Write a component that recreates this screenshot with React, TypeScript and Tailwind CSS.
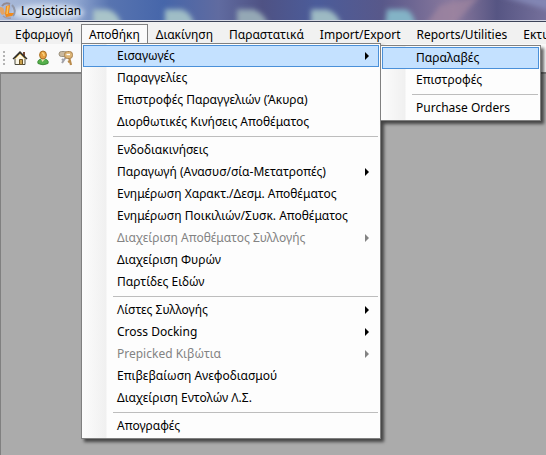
import React from "react";

type Entry = {
  label: string;
  arrow?: boolean;
  disabled?: boolean;
  active?: boolean;
};

const menuBar = [
  "Εφαρμογή",
  "Αποθήκη",
  "Διακίνηση",
  "Παραστατικά",
  "Import/Export",
  "Reports/Utilities",
  "Εκτυπώσεις",
];

const warehouseGroups: Entry[][] = [
  [
    { label: "Εισαγωγές", arrow: true, active: true },
    { label: "Παραγγελίες" },
    { label: "Επιστροφές Παραγγελιών (Άκυρα)" },
    { label: "Διορθωτικές Κινήσεις Αποθέματος" },
  ],
  [
    { label: "Ενδοδιακινήσεις" },
    { label: "Παραγωγή (Ανασυσ/σία-Μετατροπές)", arrow: true },
    { label: "Ενημέρωση Χαρακτ./Δεσμ. Αποθέματος" },
    { label: "Ενημέρωση Ποικιλιών/Συσκ. Αποθέματος" },
    { label: "Διαχείριση Αποθέματος Συλλογής", arrow: true, disabled: true },
    { label: "Διαχείριση Φυρών" },
    { label: "Παρτίδες Ειδών" },
  ],
  [
    { label: "Λίστες Συλλογής", arrow: true },
    { label: "Cross Docking", arrow: true },
    { label: "Prepicked Κιβώτια", arrow: true, disabled: true },
    { label: "Επιβεβαίωση Ανεφοδιασμού" },
    { label: "Διαχείριση Εντολών Λ.Σ." },
  ],
  [{ label: "Απογραφές" }],
];

const importGroups: Entry[][] = [
  [{ label: "Παραλαβές", active: true }, { label: "Επιστροφές" }],
  [{ label: "Purchase Orders" }],
];

// desktop icons that shine through the glass title bar
const Glass = () => (
  <svg
    className="absolute inset-0 size-full"
    viewBox="0 0 546 20"
    preserveAspectRatio="none"
    aria-hidden="true"
  >
    <defs>
      <linearGradient id="glass">
        <stop offset="0" stopColor="#a9b9d8" />
        <stop offset="0.14" stopColor="#8fa6d0" />
        <stop offset="0.2" stopColor="#5874b0" />
        <stop offset="0.3" stopColor="#4666aa" />
        <stop offset="0.4" stopColor="#606ba0" />
        <stop offset="0.48" stopColor="#4f5284" />
        <stop offset="0.58" stopColor="#4b5c9a" />
        <stop offset="0.7" stopColor="#58588a" />
        <stop offset="0.83" stopColor="#8b7a9e" />
        <stop offset="0.91" stopColor="#565583" />
        <stop offset="1" stopColor="#75709b" />
      </linearGradient>
      <filter id="soft" filterUnits="userSpaceOnUse" x="-20" y="-20" width="600" height="60">
        <feGaussianBlur stdDeviation="2.5" />
      </filter>
    </defs>
    <rect width="546" height="20" fill="url(#glass)" />
    <g filter="url(#soft)">
      <ellipse cx="48" cy="12" rx="36" ry="8" fill="#dbe5f3" opacity="0.9" />
      <path d="M93 9 H108 Q119 12 122 26 H93 Z" fill="#a9c4c9" />
      <path d="M165 9 H182 Q192 12 195 26 H165 Z" fill="#9fbdc6" />
      <path d="M237 9 H253 Q265 12 269 26 H237 Z" fill="#94a8b5" />
      <path d="M311 9 H327 Q338 12 342 26 H311 Z" fill="#9dbac3" />
      <path d="M387 9 H406 Q414 12 416 26 H385 Z" fill="#83b3c6" />
      <path d="M424 26 L440 5 L480 -4 L452 26 Z" fill="#a1869f" opacity="0.7" />
      <path d="M500 -4 H550 V10 Z" fill="#8286b4" />
    </g>
  </svg>
);

const AppLogo = () => (
  <svg width="17" height="18" viewBox="0 0 17 18" aria-hidden="true">
    <path d="M0 5 Q4 5 4 8 L5 12 L2 13 Q0 11 0 9 Z" fill="#e3a465" />
    <path d="M2 4 Q5 0 10 2" fill="none" stroke="#94898f" strokeWidth="2" />
    <path d="M12 3 Q17 8 13 14" fill="none" stroke="#9197a8" strokeWidth="2" />
    <path d="M3 14 Q6 17 11 16" fill="none" stroke="#a39aa4" strokeWidth="1.5" />
    <path d="M6 4 L10 3 L9 11 L14 11 L12 14 L6 15 L5 12 Z" fill="#f08a1d" />
    <path d="M8 4 L7 12" stroke="#f9c45b" strokeWidth="1.5" />
  </svg>
);

const HomeIcon = () => (
  <svg width="16" height="16" viewBox="0 0 16 16" aria-hidden="true">
    <path d="M11 2 H13 V6 H11 Z" fill="#7a4a35" />
    <path d="M3 8 L8 3 L13 8 V14.5 H3 Z" fill="#fbf7e8" stroke="#4c4c40" />
    <path d="M1 9 L8 2 L15 9" fill="none" stroke="#33302a" strokeWidth="1.4" />
    <path d="M3 9 L8 4 L13 9" fill="none" stroke="#e0bd62" />
    <path d="M7.5 14.5 V9.5 H10.5 V14.5 Z" fill="#c9a04a" stroke="#6b5326" />
  </svg>
);

const UserIcon = () => (
  <svg width="16" height="16" viewBox="0 0 16 16" aria-hidden="true">
    <path d="M3 13.5 C2 10 5 9 8 9 C11 9 14 10 13 13.5 Q8 16 3 13.5 Z" fill="#55b04c" stroke="#3c8a36" />
    <path d="M6 9 L7.5 12 L10 9 Z" fill="#e9e3b4" />
    <ellipse cx="8" cy="5" rx="3.4" ry="4" fill="#e6a040" stroke="#a86f24" />
    <path d="M7 3 Q9 3 9 6" fill="none" stroke="#f8d07c" strokeWidth="1.5" />
  </svg>
);

const KeysIcon = () => (
  <svg width="16" height="16" viewBox="0 0 16 16" aria-hidden="true">
    <path d="M8 7 L4 13 M6 11 L4 9" stroke="#a3a3aa" strokeWidth="2" />
    <rect x="1" y="1.5" width="8" height="5" rx="2.5" fill="#c9b9a0" stroke="#9b917f" />
    <path d="M11 7 L13 15 M12 11 L10 12" stroke="#b98a4b" strokeWidth="2.2" />
    <rect x="6.5" y="1.5" width="8" height="7" rx="3" fill="#dcb475" stroke="#a98250" />
    <path d="M8.5 4.5 H12" stroke="#fff" strokeWidth="1.4" />
  </svg>
);

const Grip = () => (
  <svg width="3" height="16" viewBox="0 0 3 16" aria-hidden="true">
    <path d="M1 1 V16" stroke="#b4b4b4" strokeWidth="2" strokeDasharray="2 2" />
  </svg>
);

const Arrow = () => (
  <svg className="shrink-0" width="4" height="8" viewBox="0 0 4 8" aria-hidden="true">
    <path d="M0 0 L4 4 L0 8 Z" fill="currentColor" />
  </svg>
);

const Menu = ({ groups, label, width }: { groups: Entry[][]; label: string; width: string }) => (
  <div
    role="menu"
    aria-label={label}
    className={`${width} border border-[#808080] bg-linear-to-r from-[#fcfcfc] from-0% via-[#f0f0f0] via-[24px] to-[#fdfdfd] to-[25px] p-px shadow-[3px_3px_3px_0px_rgba(0,0,0,0.6)]`}
  >
    {groups.map((group, i) => (
      <div key={i} role="group">
        {i > 0 && (
          <div className="flex h-1.5 items-center pr-px pl-[30px]">
            <hr className="w-full border-t border-[#bdbdbd]" />
          </div>
        )}
        {group.map((entry) => (
          <button
            key={entry.label}
            type="button"
            role="menuitem"
            disabled={entry.disabled}
            className={`flex h-[22px] w-full items-center justify-between border pr-[9px] pl-[33px] text-left whitespace-nowrap ${
              entry.active ? "border-[#4a90d9] bg-[#c4e1ff]" : "border-transparent"
            } ${entry.disabled ? "text-[#838383]" : "text-black"}`}
          >
            {entry.label}
            {entry.arrow && <Arrow />}
          </button>
        ))}
      </div>
    ))}
  </div>
);

const App = () => {
  return (
    <div className="flex min-h-screen flex-col overflow-hidden bg-[#ababab] font-['Noto_Sans','Open_Sans',sans-serif] text-[12px] leading-4 text-black">
      <header className="relative flex h-[22px] items-center border-b border-[#3c4358] bg-[#e3e6ee]">
        <Glass />
        <div className="relative flex items-center gap-1">
          <AppLogo />
          <h1>Logistician</h1>
        </div>
        <div className="absolute inset-x-0 bottom-0 h-px bg-[#d5d8e4]" />
      </header>
      <nav className="flex h-[22px] items-end overflow-hidden bg-[#f1f1f1] pl-[7px] whitespace-nowrap">
        {menuBar.map((item) => (
          <button
            key={item}
            type="button"
            className={`h-5 shrink-0 border border-b-0 px-[7px] ${
              item === "Αποθήκη" ? "border-[#808080] bg-[#fafafa]" : "border-transparent"
            }`}
          >
            {item}
          </button>
        ))}
      </nav>
      <div className="relative flex h-7 items-center gap-1.5 bg-[#fafafa] pl-[3px]">
        <Grip />
        <div className="flex gap-[7px]">
          <button type="button" aria-label="Home"><HomeIcon /></button>
          <button type="button" aria-label="User"><UserIcon /></button>
          <button type="button" aria-label="Keys"><KeysIcon /></button>
        </div>
        <div className="absolute -top-px left-[81px] flex items-start">
          <Menu groups={warehouseGroups} label="Αποθήκη" width="w-[300px]" />
          <div className="-ml-px pt-0.5">
            <Menu groups={importGroups} label="Εισαγωγές" width="w-[161px]" />
          </div>
        </div>
      </div>
      <main className="flex-1 border-t-2 border-l border-[#808080]" />
    </div>
  );
};

export default App;
